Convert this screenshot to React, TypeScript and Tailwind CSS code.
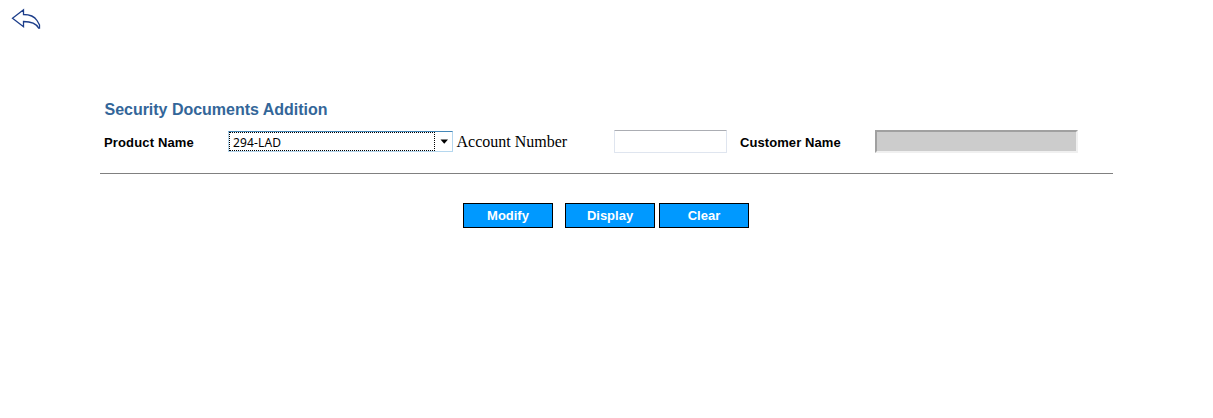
import { useState } from "react";

function BackArrow() {
  return (
    <svg width="32" height="24" viewBox="0 0 32 24" fill="none" stroke="#1c3d8a" strokeWidth="1.3" strokeLinejoin="miter">
      <path d="M2.5 10.2 L13.5 1.7 V6.5 C19.5 6.5 24.5 8.5 27 12.5 L29.5 17 V20 H28.5 C26.5 16 21.5 13.5 13.5 13.5 V18.7 Z" />
    </svg>
  );
}

function ActionButton({ label }: { label: string }) {
  return (
    <button
      type="button"
      className="h-[25px] w-[90px] border border-black bg-[#0099ff] text-center text-[13px] leading-[23px] font-bold text-white"
    >
      {label}
    </button>
  );
}

export default function App() {
  const [account, setAccount] = useState("");

  return (
    <main className="h-[418px] w-[1213px] overflow-hidden bg-white font-['Liberation_Sans',Arial,sans-serif] text-[13px] text-black">
      <header className="h-[99px] pt-2 pl-2.5">
        <button type="button" aria-label="Back" className="block">
          <BackArrow />
        </button>
      </header>

      <section className="ml-[100px] w-[1013px]">
        <h1 className="h-[31px] pt-px pl-[4.5px] text-[16px] leading-5 font-bold tracking-[-0.02px] whitespace-nowrap text-[#336699]">
          Security Documents Addition
        </h1>

        <div className="flex h-11 items-start border-b border-[#808080] pl-1 leading-[23px] whitespace-nowrap">
          <span className="w-[124px] pt-px font-bold tracking-[0.15px]">Product Name</span>
          <button
            type="button"
            className="mt-px flex h-[21px] w-[225px] border border-[#b5d7ee] border-t-[#4387b8] bg-white text-left"
          >
            <span className="h-[19px] w-[206px] border border-dotted border-black pl-[3px] font-['Noto_Sans',sans-serif] text-[12px] leading-[19px] tracking-[0.15px]">
              294-LAD
            </span>
            <svg className="mt-[7px] ml-[5px]" width="8" height="5" viewBox="0 0 8 5">
              <path d="M0.5 0.5H8L4.25 4.75Z" fill="#000" />
            </svg>
          </button>
          <span className="w-[161px] pl-[3.5px] font-['Liberation_Serif','Times_New_Roman',serif] text-[16px]">
            Account Number
          </span>
          <input
            aria-label="Account Number"
            value={account}
            onChange={(e) => setAccount(e.target.value)}
            className="h-[23px] w-[113px] rounded-[1px] border border-[#dfe5ef] border-t-[#abadb3] bg-white px-1 outline-none"
          />
          <span className="w-[148px] pt-px pl-[13px] font-bold tracking-[0.08px]">Customer Name</span>
          <input
            aria-label="Customer Name"
            readOnly
            className="h-[23px] w-[203px] border-2 border-t-[#a0a0a0] border-r-[#f0f0f0] border-b-[#f0f0f0] border-l-[#a0a0a0] bg-[#cccccc] outline-none"
          />
        </div>

        <div className="flex pt-[29px] pl-[363px]">
          <div className="mr-3 flex">
            <ActionButton label="Modify" />
          </div>
          <div className="flex gap-1">
            <ActionButton label="Display" />
            <ActionButton label="Clear" />
          </div>
        </div>
      </section>
    </main>
  );
}
